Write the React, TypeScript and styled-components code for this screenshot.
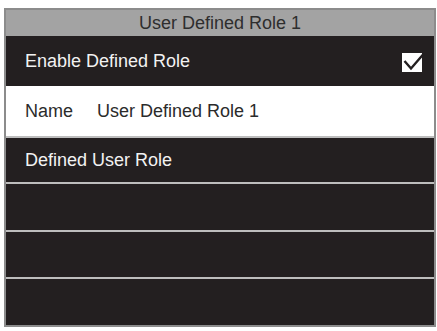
import styled, { createGlobalStyle } from "styled-components";

const Global = createGlobalStyle`
body {
  margin: 0;
  background: #ffffff;
  font-family: "Liberation Sans", Arial, sans-serif;
}
`

const Screen = styled.div`
box-sizing: border-box;
margin: 8px 0 0 4px;
width: 432px;
height: 319px;
border: 2px solid #8c8c8c;
background: #231f20;
display: flex;
flex-direction: column;
`

const Title = styled.div`
height: 26px;
flex: none;
background: #a3a3a3;
color: #2e2e2e;
font-size: 18px;
display: flex;
align-items: center;
justify-content: center;
`

const Row = styled.div<{ $light?: boolean; $line?: boolean; $h?: number }>`
box-sizing: border-box;
display: flex;
align-items: center;
padding: 0 12px 0 19px;
font-size: 18px;
color: ${(p) => (p.$light ? "#2b2b2b" : "#f2f2f2")};
background: ${(p) => (p.$light ? "#ffffff" : "#231f20")};
border-top: ${(p) => (p.$line ? "2px solid #bdbdbd" : "none")};
${(p) => (p.$h ? `height: ${p.$h}px; flex: none;` : "flex: 1;")}
`

const Label = styled.span`
width: 72px;
flex: none;
`

const Grow = styled.span`
flex: 1;
`

const Check = styled.div`
position: relative;
width: 20px;
height: 19px;
background: #ffffff;
margin-top: 2px;
`

function CheckBox() {
    return (
        <Check>
            <svg width="24" height="24" viewBox="0 0 24 24" style={{ position: "absolute", left: 0, top: -4 }}>
                <path d="M2.5 12 L9 19.5 L21.5 5" fill="none" stroke="#231f20" strokeWidth="2.4" />
            </svg>
        </Check>
    );
}

export default function App() {
    return (<>
        <Global />
        <Screen>
            <Title>User Defined Role 1</Title>
            <Row $h={50}>
                <Grow>Enable Defined Role</Grow>
                <CheckBox />
            </Row>
            <Row $light $h={50}>
                <Label>Name</Label>
                <span>User Defined Role 1</span>
            </Row>
            <Row $line $h={46}>Defined User Role</Row>
            <Row $line></Row>
            <Row $line></Row>
            <Row $line></Row>
        </Screen>
    </>);
}
